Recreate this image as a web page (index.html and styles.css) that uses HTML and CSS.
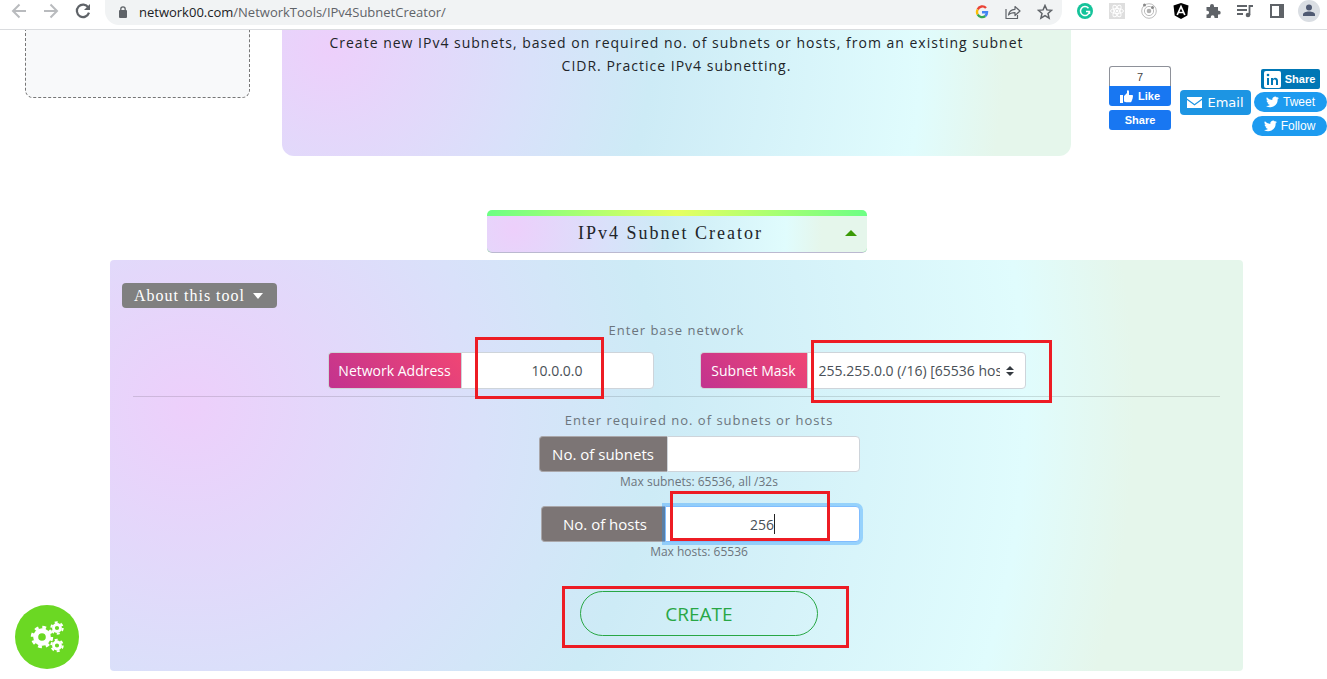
FILE: index.html
```html
<!DOCTYPE html>
<html lang="en">
<head>
<meta charset="utf-8">
<title>IPv4 Subnet Creator</title>
<link rel="stylesheet" href="styles.css">
</head>
<body>
<header class="browser">
  <div class="nav">
    <button aria-label="Back"><svg width="16" height="16" viewBox="0 0 16 16" fill="none" stroke="#b9bbbe" stroke-width="2"><path d="M15 8H3M8.500 1.500 2 8l6.500 6.500"/></svg></button>
    <button aria-label="Forward"><svg width="16" height="16" viewBox="0 0 16 16" fill="none" stroke="#b9bbbe" stroke-width="2"><path d="M1 8h12M7.500 1.500 14 8l-6.500 6.500"/></svg></button>
    <button aria-label="Reload"><svg width="16" height="16" viewBox="0 0 16 16" fill="none" stroke="#5f6368" stroke-width="2.200"><path d="M13.300 4.500A6.200 6.200 0 1 0 14 9.700"/><path d="M15 1v6H9z" fill="#5f6368" stroke="none"/></svg></button>
  </div>
  <div class="address">
    <svg width="10" height="12" viewBox="0 0 10 12"><rect x="1" y="4" width="8" height="8" rx="1" fill="#5f6368"/><path d="M2.800 5V3a2.200 2.200 0 0 1 4.400 0v2" fill="none" stroke="#5f6368" stroke-width="1.300"/></svg>
    <span class="url"><b>network00.com</b>/NetworkTools/IPv4SubnetCreator/</span>
    <svg width="14" height="14" viewBox="0 0 14 14" fill="none" stroke-width="2.400"><path d="M11 3A5 5 0 0 0 2.700 4.500" stroke="#ea4335"/><path d="M2.700 4.500a5 5 0 0 0 0 5" stroke="#fbbc05"/><path d="M2.700 9.500A5 5 0 0 0 10.300 11" stroke="#34a853"/><path d="M10.300 11A5 5 0 0 0 12 7.200H7" stroke="#4285f4"/></svg>
    <svg width="16" height="16" viewBox="0 0 16 16" fill="none" stroke="#5f6368" stroke-width="1.200" stroke-linejoin="round"><path d="M1 5v9.500h11.500V11M3.500 11c.5-4 3-5.500 6.500-5.700V2.500l5 4.500-5 4.500V8.700c-3 0-5 .3-6.500 2.300z"/></svg>
    <svg width="16" height="16" viewBox="0 0 16 16" fill="none" stroke="#5f6368" stroke-width="1.500"><path d="m8 1.500 1.900 4.400 4.700.4-3.600 3.100 1.100 4.700L8 11.600l-4.100 2.500L5 9.400 1.400 6.300l4.700-.4z"/></svg>
  </div>
  <div class="extensions">
    <svg viewBox="0 0 16 16"><circle cx="8" cy="8" r="8" fill="#15c39a"/><path d="M11.500 5.200A4.500 4.500 0 1 0 12.400 9M9 8.500h3.500V11" fill="none" stroke="#fff" stroke-width="1.500"/></svg>
    <svg viewBox="0 0 16 16"><rect width="16" height="16" fill="#dedede"/><g fill="none" stroke="#fff"><ellipse cx="8" cy="8" rx="6.500" ry="2.500"/><ellipse cx="8" cy="8" rx="6.500" ry="2.500" transform="rotate(60 8 8)"/><ellipse cx="8" cy="8" rx="6.500" ry="2.500" transform="rotate(120 8 8)"/></g><circle cx="8" cy="8" r="1.300" fill="#fff"/></svg>
    <svg viewBox="0 0 16 16"><g fill="none" stroke="#bcbcbc"><circle cx="8" cy="8" r="7.300"/><circle cx="8" cy="8" r="4.600"/></g><circle cx="8" cy="8" r="2.300" fill="#b0b0b0"/><circle cx="3.500" cy="2" r="1.500" fill="#888"/><circle cx="11.500" cy="4.500" r="1.500" fill="#888"/></svg>
    <svg viewBox="0 0 16 16"><path d="m8 0 7.500 2.600-1.200 10L8 16l-6.300-3.400L.5 2.600z" fill="#000"/><path d="M4.200 12 8 3.500l3.800 8.500M5.800 9.500h4.400" fill="none" stroke="#fff" stroke-width="1.700"/></svg>
    <svg viewBox="0 0 16 16"><path d="M1.500 4H5V3a2 2 0 0 1 4 0v1h4v3.800h.8a1.900 1.900 0 0 1 0 3.800H13V15H9.500v-.8a1.900 1.900 0 0 0-3.800 0v.8H1.500v-3.500h.7a1.900 1.900 0 0 0 0-3.800h-.7z" fill="#5f6368"/></svg>
    <svg viewBox="0 0 16 16"><g fill="none" stroke="#5f6368" stroke-width="1.800"><path d="M0 3h10M0 7h10M0 11h6M12.500 12V3H16"/></g><circle cx="11" cy="12" r="2.300" fill="#5f6368"/></svg>
    <svg viewBox="0 0 16 16"><path d="M1 1h14v14H1zM3 3v10h7V3z" fill="#5f6368" fill-rule="evenodd"/></svg>
    <svg class="avatar" viewBox="0 0 22 22"><circle cx="11" cy="11" r="11" fill="#dadee3"/><circle cx="11" cy="7.500" r="3" fill="#505a72"/><path d="M5 16v-1.500c0-2 3-3 6-3s6 1 6 3V16z" fill="#505a72"/></svg>
  </div>
</header>

<main class="page">
  <div class="top">
    <aside class="card"></aside>
    <section class="hero"><p>Create new IPv4 subnets, based on required no. of subnets or hosts, from an existing subnet CIDR. Practice IPv4 subnetting.</p></section>
    <div class="social">
      <div class="facebook">
        <span class="count">7</span>
        <button class="like"><svg width="13" height="13" viewBox="0 0 13 13" fill="#fff"><path d="M0 5h3v8H0zM4 6l3-3V1c0-1 2-1 2 .8V5h3c1.500 0 1.200 1.500.6 2 .4.600.2 1.500-.4 2 .2.800-.1 1.300-.6 1.800 0 1-.6 1.500-1.600 1.500H6l-2-.8z"/></svg>Like</button>
        <button class="fbshare">Share</button>
      </div>
      <button class="email"><svg width="15" height="11" viewBox="0 0 15 11" fill="#fff"><path d="M0 0h15v1.500L7.500 7 0 1.500zM0 3l7.500 5.500L15 3v8H0z"/></svg>Email</button>
      <div class="links">
        <button class="linkedin"><svg width="17" height="17" viewBox="0 0 17 17"><rect width="17" height="17" rx="2" fill="#fff"/><path d="M3 7h2v7H3zM7 7h2v1c1.300-2 5-1.500 5 1.800V14h-2v-4c0-2-3-2-3 0v4H7z" fill="#0077b5"/><circle cx="4" cy="4" r="1.300" fill="#0077b5"/></svg>Share</button>
        <button class="tweet"><svg width="13" height="12" viewBox="0 0 24 20" fill="#fff"><path d="M24 2.400a10 10 0 0 1-2.800.8A5 5 0 0 0 23.300.5a10 10 0 0 1-3.100 1.200 4.900 4.900 0 0 0-8.400 4.500A14 14 0 0 1 1.700 1a4.900 4.900 0 0 0 1.500 6.600 5 5 0 0 1-2.200-.6 4.900 4.900 0 0 0 3.900 4.900 5 5 0 0 1-2.200.1 4.900 4.900 0 0 0 4.600 3.400A10 10 0 0 1 0 17.400 14 14 0 0 0 21.500 5 10 10 0 0 0 24 2.400z"/></svg>Tweet</button>
        <button class="tweet follow"><svg width="13" height="12" viewBox="0 0 24 20" fill="#fff"><path d="M24 2.400a10 10 0 0 1-2.800.8A5 5 0 0 0 23.300.5a10 10 0 0 1-3.100 1.200 4.900 4.900 0 0 0-8.400 4.500A14 14 0 0 1 1.700 1a4.900 4.900 0 0 0 1.500 6.600 5 5 0 0 1-2.200-.6 4.900 4.900 0 0 0 3.900 4.900 5 5 0 0 1-2.200.1 4.900 4.900 0 0 0 4.600 3.400A10 10 0 0 1 0 17.400 14 14 0 0 0 21.500 5 10 10 0 0 0 24 2.400z"/></svg>Follow</button>
      </div>
    </div>
  </div>

  <div class="tool">
    <button class="title"><span class="title-body fade"><span>IPv4 Subnet Creator</span><svg width="12" height="6" viewBox="0 0 12 6"><path d="M0 6 6 0l6 6z" fill="#3a9a06"/></svg></span></button>
    <form class="panel fade">
      <button type="button" class="about">About this tool<svg width="10" height="6" viewBox="0 0 10 6"><path d="M0 0h10L5 6z" fill="#fff"/></svg></button>
      <p class="hint">Enter base network</p>
      <div class="row">
        <div class="group">
          <label class="pink" for="net">Network Address</label>
          <input id="net" class="field" value="10.0.0.0">
          <span class="mark mark-net"></span>
        </div>
        <div class="group">
          <label class="pink" for="mask">Subnet Mask</label>
          <select id="mask" class="field"><option>255.255.0.0 (/16) [65536 hosts]</option></select>
          <svg class="sort" width="8" height="10" viewBox="0 0 8 10"><path d="M0 4 4 0l4 4zM0 6h8l-4 4z" fill="#343a40"/></svg>
          <span class="mark mark-mask"></span>
        </div>
      </div>
      <hr>
      <div class="amounts">
        <p class="hint">Enter required no. of subnets or hosts</p>
        <div class="group wide">
          <label class="grey" for="subnets">No. of subnets</label>
          <input id="subnets" class="field">
        </div>
        <small>Max subnets: 65536, all /32s</small>
        <div class="group narrow">
          <label class="grey" for="hosts">No. of hosts</label>
          <input id="hosts" class="field active" value="256">
          <span class="caret"></span>
          <span class="mark mark-hosts"></span>
        </div>
        <small>Max hosts: 65536</small>
        <div class="action">
          <button type="button" class="create">CREATE</button>
          <span class="mark mark-create"></span>
        </div>
      </div>
    </form>
  </div>
</main>

<button class="settings" aria-label="Settings"><svg width="34" height="32" viewBox="0 0 34 32" fill="none" stroke="#fff"><circle cx="12" cy="16" r="6.300" stroke-width="5"/><circle cx="12" cy="16" r="9.700" stroke-width="3" stroke-dasharray="3.800 3.818"/><circle cx="27" cy="7" r="3.500" stroke-width="2.800"/><circle cx="27" cy="7" r="5.700" stroke-width="2" stroke-dasharray="3 2.969"/><circle cx="27" cy="24.500" r="3.500" stroke-width="2.800"/><circle cx="27" cy="24.500" r="5.700" stroke-width="2" stroke-dasharray="3 2.969"/></svg></button>
</body>
</html>
```
FILE: styles.css
```css
* { box-sizing: border-box; }
body { margin: 0; background: #fff; color: #212529; font-family: "Open Sans", "Noto Sans", sans-serif; overflow: hidden; }
button { border: 0; padding: 0; background: none; font: inherit; color: inherit; }
p { margin: 0; }
svg { flex: none; }

.browser { display: flex; height: 30px; padding-right: 7px; border-bottom: 1px solid #dadcdf; }
.nav { display: flex; gap: 16px; height: 22px; padding-left: 11px; align-items: center; }
.nav button { width: 16px; height: 16px; line-height: 0; }
.address { flex: 1; display: flex; align-items: center; gap: 16px; height: 25px; margin-left: 14px; padding: 0 9px 2px 13px; border-radius: 0 0 14px 14px; background: #f1f3f4; }
.url { flex: 1; margin-left: -5px; font-size: 13px; line-height: 20px; color: #5f6368; }
.url b { font-weight: 400; color: #202124; }
.extensions { display: flex; align-items: center; gap: 16px; height: 22px; padding-left: 15px; }
.extensions svg { width: 16px; height: 16px; }
.extensions .avatar { width: 22px; height: 22px; margin-left: -3px; }

.fade { background: radial-gradient(circle farthest-corner at 7% 36%, #edcffb 0%, #d9e1fa 27%, #cdebf6 43%, #e0fcfd 77%, #e5f6eb 87%); }

.top { display: grid; grid-template-columns: 225px 1fr 218px; align-items: start; padding-left: 25px; }
.card { height: 68px; border: 1px dashed #777; border-top: 0; border-radius: 0 0 8px 8px; background: #f8f9fa; }
.hero { height: 126px; margin: 0 38px 0 32px; padding: 1px 40px; border-radius: 0 0 12px 12px; background: radial-gradient(circle farthest-corner at 6% 15%, #edcffb 0%, #d9e1fa 27%, #cdebf6 43%, #e0fcfd 79%, #e5f6eb 90%); text-align: center; font-size: 14px; line-height: 23px; letter-spacing: 1px; }
.social { display: flex; align-items: flex-start; padding-top: 36px; font: 12px "Liberation Sans", sans-serif; color: #fff; }
.social button { display: flex; align-items: center; justify-content: center; }
.facebook { width: 62px; font-weight: 700; font-size: 11px; }
.count { display: block; height: 20px; border: 1px solid #8e9199; border-bottom: 0; border-radius: 3px 3px 0 0; background: #fff; color: #444; font-weight: 400; text-align: center; line-height: 21px; }
.like, .fbshare { width: 100%; height: 20px; gap: 5px; border-radius: 3px; background: #1877f2; }
.like { border-radius: 0 0 3px 3px; }
.fbshare { margin-top: 4px; }
.email { width: 71px; height: 25px; margin: 24px 1px 0 9px; gap: 5px; border-radius: 4px; background: #1d95e3; font: 13px "DejaVu Sans", sans-serif; }
.links { flex: 1; display: flex; flex-direction: column; align-items: flex-end; padding-top: 3px; }
.linkedin { width: 59px; height: 20px; gap: 4px; padding-right: 2px; margin-right: 7px; border-radius: 2px; background: #0077b5; font-weight: 700; font-size: 11px; }
.tweet { width: 73px; height: 20px; gap: 4px; margin-top: 3px; border-radius: 10px; background: #1d9bf0; }
.follow { width: 75px; margin-top: 4px; }

.tool { margin: 54px 84px 0 110px; }
.title { display: block; width: 380px; margin: 0 auto; padding-top: 6px; border-radius: 5px; overflow: hidden; background: linear-gradient(90deg, #6cff84, #e6ff61, #6cff84); border-bottom: 1px solid #bbb9d0; }
.title-body { display: flex; align-items: center; height: 36px; padding: 0 10px 2px; font: 18px "Liberation Serif", serif; letter-spacing: 2px; }
.title-body span { flex: 1; }
.panel { margin-top: 7px; padding: 23px 12px 35px; border-radius: 4px; }
.about { display: flex; align-items: center; gap: 8px; height: 25px; padding: 0 14px 0 12px; border-radius: 4px; background: #808080; color: #fff; font: 16px "Liberation Serif", serif; letter-spacing: 1px; }
.hint { height: 20px; text-align: center; font-size: 13px; line-height: 20px; letter-spacing: 1px; color: #6c757d; }
.about + .hint { margin-top: 12px; }
.row { display: flex; justify-content: center; gap: 46px; margin-top: 12px; }
.group { position: relative; display: flex; width: 326px; height: 37px; }
.group label { display: flex; flex: none; align-items: center; justify-content: center; border: 1px solid #ced4da; border-right: 0; border-radius: 4px 0 0 4px; color: #fff; font-size: 14px; }
.pink { width: 133px; background: linear-gradient(45deg, #c2338f, #f04674); }
.pink[for="mask"] { width: 107px; }
.field { flex: 1; min-width: 0; border: 1px solid #ced4da; border-radius: 0 4px 4px 0; outline: 0; background: #fff; color: #495057; font: 14px "Open Sans", "Noto Sans", sans-serif; text-align: center; }
select.field { appearance: none; padding: 0 25px 0 11px; text-align: left; }
.sort { position: absolute; right: 12px; top: 14px; }
hr { margin: 7px 11px 13px; border: 0; border-top: 1px solid rgba(0, 0, 0, .12); }
.amounts { display: flex; flex-direction: column; align-items: center; padding-left: 45px; }
.amounts .hint { margin-bottom: 6px; }
.amounts .group { width: 321px; height: 36px; }
.amounts .narrow { width: 319px; margin-left: 2px; }
.group .grey { width: 128px; border-color: #aaa7aa; background: #7c7575; font-size: 15px; }
.narrow .grey { width: 124px; padding-left: 4px; }
.amounts .active { border-color: #80bdff; box-shadow: 0 0 0 3px rgba(30, 145, 255, .35); }
small { height: 20px; color: #6c757d; font-size: 12px; line-height: 20px; }
small + .narrow { margin-top: 14px; }
.caret { position: absolute; left: 233px; top: 8px; width: 1px; height: 20px; background: #222; }
.action { position: relative; margin-top: 29px; }
.create { display: block; width: 238px; height: 45px; border: 1px solid #28a745; border-radius: 23px; color: #28a745; font-size: 19px; }

/* Highlight frames drawn over the controls */
.mark { position: absolute; border: 3px solid #ed1c24; pointer-events: none; }
.mark-net { left: 147px; top: -15px; width: 129px; height: 62px; }
.mark-mask { left: 111px; top: -12px; width: 241px; height: 63px; }
.mark-hosts { left: 129px; top: -15px; width: 160px; height: 50px; }
.mark-create { left: -18px; top: -5px; width: 287px; height: 62px; }

.settings { position: fixed; left: 15px; bottom: 10px; display: flex; align-items: center; justify-content: center; width: 64px; height: 64px; border-radius: 50%; background: #6bd823; }
```
